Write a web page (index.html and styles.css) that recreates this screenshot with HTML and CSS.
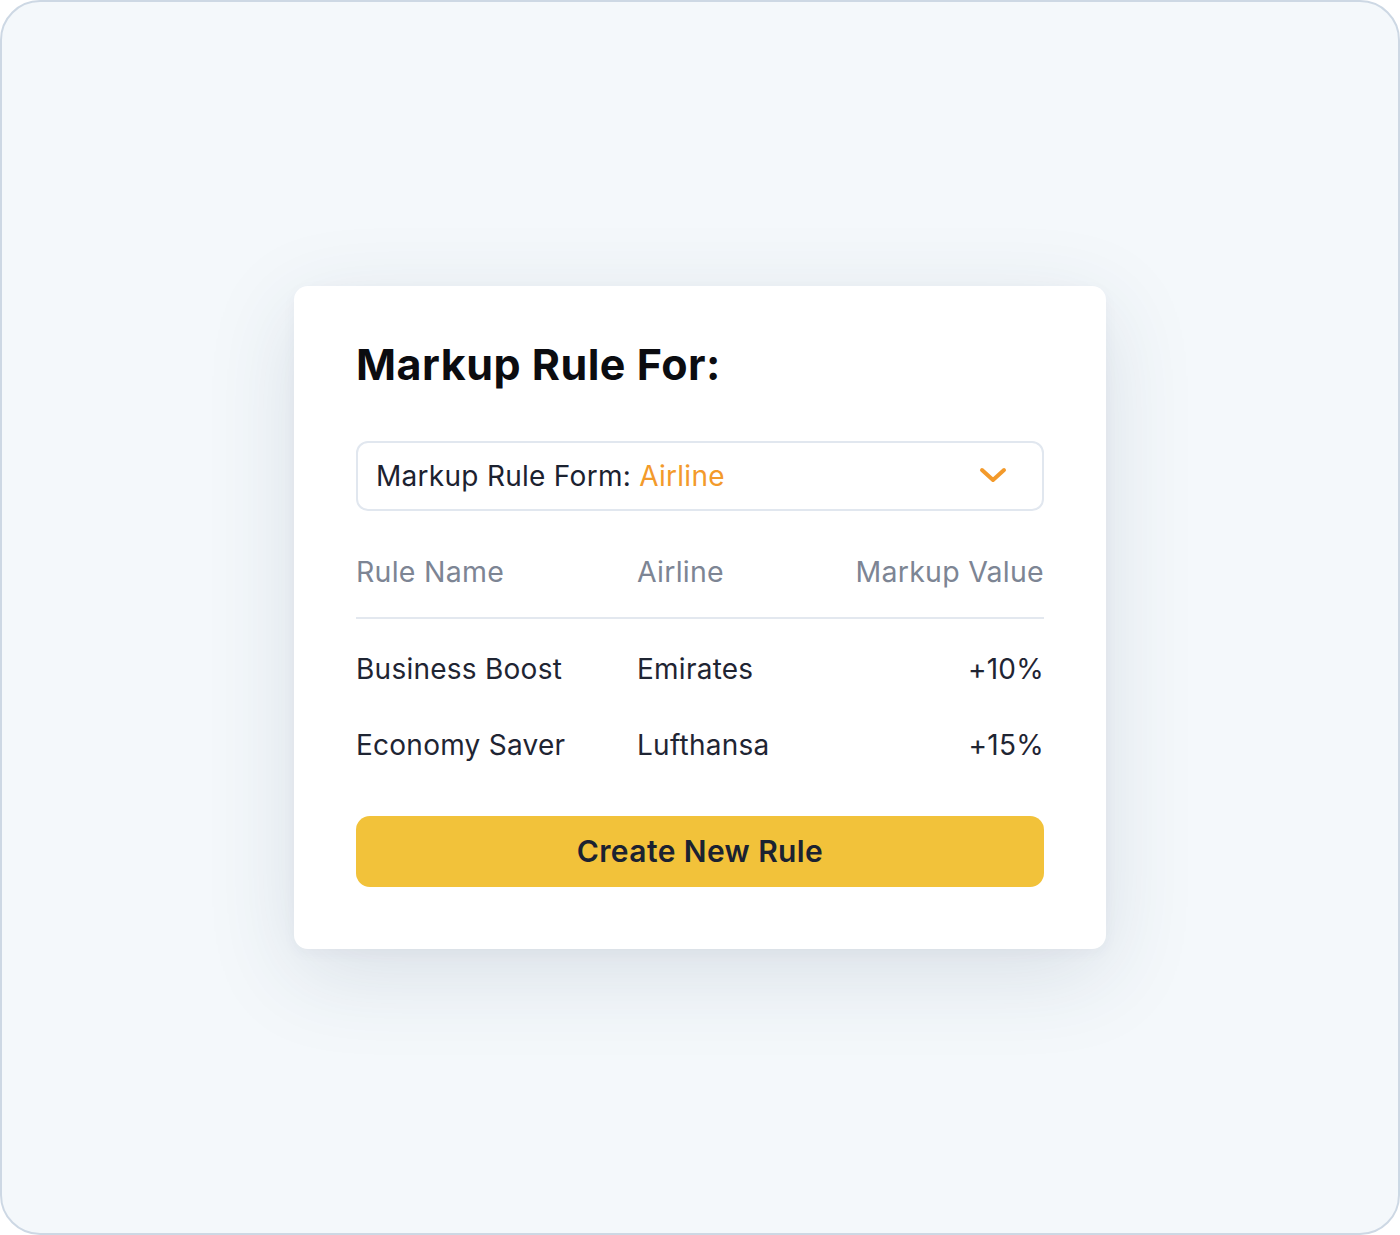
FILE: index.html
```html
<!DOCTYPE html>
<html lang="en">
<head>
<meta charset="utf-8">
<title>Markup Rule</title>
<link rel="stylesheet" href="styles.css">
</head>
<body>
<div class="frame">
  <div class="card">
    <h1 class="title">Markup Rule For:</h1>
    <div class="select">
      <span class="select-label">Markup Rule Form: <span class="accent">Airline</span></span>
      <svg class="chevron" width="30" height="20" viewBox="0 0 30 20" aria-hidden="true">
        <polyline points="4,4 15,14 26,4" fill="none" stroke="#f39a2b" stroke-width="4" stroke-linecap="round" stroke-linejoin="round"/>
      </svg>
    </div>
    <div class="table">
      <div class="row head">
        <span>Rule Name</span>
        <span>Airline</span>
        <span class="num">Markup Value</span>
      </div>
      <div class="body">
        <div class="row">
          <span>Business Boost</span>
          <span>Emirates</span>
          <span class="num">+10%</span>
        </div>
        <div class="row">
          <span>Economy Saver</span>
          <span>Lufthansa</span>
          <span class="num">+15%</span>
        </div>
      </div>
    </div>
    <button class="btn" type="button">Create New Rule</button>
  </div>
</div>
</body>
</html>
```
FILE: styles.css
```css
* { box-sizing: border-box; }
html, body { margin: 0; padding: 0; }
body {
  font-family: Inter, "Noto Sans", "Liberation Sans", sans-serif;
  background: #ffffff;
}
.frame {
  width: 1400px;
  height: 1235px;
  border: 2px solid #cdd8e4;
  border-radius: 40px;
  background: #f4f8fb;
  display: flex;
  align-items: center;
  justify-content: center;
}
.card {
  width: 812px;
  background: #ffffff;
  border-radius: 14px;
  padding: 53px 62px 62px;
  box-shadow: 0 24px 90px rgba(40, 60, 90, 0.13), 0 4px 14px rgba(40, 60, 90, 0.04);
}
.title {
  margin: 0;
  font-size: 43px;
  line-height: 1.2;
  font-weight: 700;
  color: #0b0c10;
  letter-spacing: 0.5px;
}
.select {
  margin-top: 50px;
  height: 70px;
  border: 2px solid #e1e7ef;
  border-radius: 12px;
  display: flex;
  align-items: center;
  justify-content: space-between;
  padding: 0 34px 0 18px;
}
.select-label {
  font-size: 28px;
  line-height: 34px;
  letter-spacing: 0.28px;
  color: #1c2230;
}
.accent { color: #f39a2b; }
.chevron { display: block; }
.table { margin-top: 44px; }
.row {
  display: grid;
  grid-template-columns: 281px 1fr auto;
  font-size: 28px;
  line-height: 34px;
  letter-spacing: 0.25px;
  color: #1f2533;
}
.row .num { text-align: right; }
.head {
  color: #7d8594;
  font-size: 28.5px;
  padding-bottom: 28px;
  border-bottom: 2px solid #e3e8ef;
}
.body { padding-top: 12px; }
.body .row { padding: 21px 0; }
.btn {
  display: block;
  width: 100%;
  margin-top: 33px;
  height: 71px;
  border: none;
  border-radius: 14px;
  background: #f2c23a;
  color: #1b2231;
  font-family: inherit;
  font-size: 30px;
  font-weight: 600;
  letter-spacing: 0.4px;
}
```
